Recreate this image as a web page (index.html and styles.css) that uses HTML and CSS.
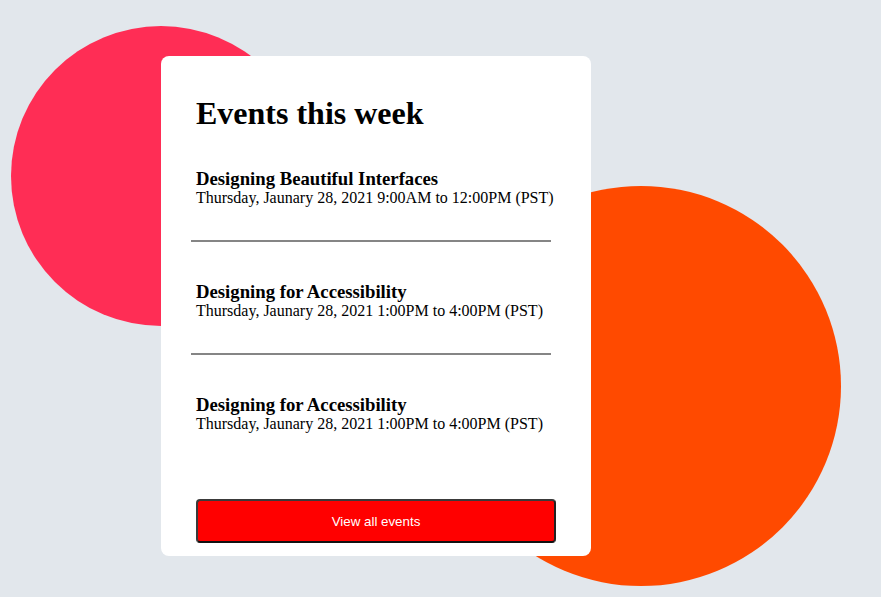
FILE: index.html
```html
<!DOCTYPE html>
<html lang="en">
<head>
<meta charset="utf-8">
<title>Events this week</title>
<link rel="stylesheet" href="styles.css">
</head>
<body>
<main class="stage">
  <div class="blob blob-pink"></div>
  <div class="blob blob-orange"></div>
  <section class="card">
    <h1 class="card-title">Events this week</h1>
    <ul class="events">
      <li class="event">
        <h2 class="event-name">Designing Beautiful Interfaces</h2>
        <p class="event-time">Thursday, Jaunary 28, 2021 9:00AM to 12:00PM (PST)</p>
      </li>
      <li class="divider"></li>
      <li class="event">
        <h2 class="event-name">Designing for Accessibility</h2>
        <p class="event-time">Thursday, Jaunary 28, 2021 1:00PM to 4:00PM (PST)</p>
      </li>
      <li class="divider"></li>
      <li class="event">
        <h2 class="event-name">Designing for Accessibility</h2>
        <p class="event-time">Thursday, Jaunary 28, 2021 1:00PM to 4:00PM (PST)</p>
      </li>
    </ul>
    <button class="btn" type="button">View all events</button>
  </section>
</main>
</body>
</html>
```

FILE: styles.css
```css
html, body {
  margin: 0;
  padding: 0;
}
body {
  background: #e2e7ec;
  font-family: "Liberation Serif", "Times New Roman", serif;
  color: #000;
  width: 881px;
  height: 597px;
  overflow: hidden;
}
.stage {
  position: relative;
  padding: 56px 0 0 161px;
}
.blob {
  position: absolute;
  border-radius: 50%;
}
.blob-pink {
  left: 11px;
  top: 26px;
  width: 300px;
  height: 300px;
  background: #ff2d55;
}
.blob-orange {
  left: 441px;
  top: 186px;
  width: 400px;
  height: 400px;
  background: #ff4a00;
}
.card {
  position: relative;
  box-sizing: border-box;
  width: 430px;
  height: 500px;
  background: #fff;
  border-radius: 8px;
  padding: 40px 35px 13px 35px;
  display: flex;
  flex-direction: column;
}
.card-title {
  margin: 0;
  font-size: 32px;
  line-height: 35px;
  font-weight: bold;
}
.events {
  list-style: none;
  margin: 37px 0 0 0;
  padding: 0;
  display: flex;
  flex-direction: column;
}
.event-name {
  margin: 0;
  font-size: 18.72px;
  line-height: 21px;
  font-weight: bold;
}
.event-time {
  margin: 0;
  font-size: 16px;
  line-height: 18px;
}
.divider {
  width: 360px;
  margin: 33px 0 39px -5px;
  border-top: 2px solid #858585;
}
.btn {
  margin-top: auto;
  width: 360px;
  height: 44px;
  background: #ff0000;
  color: #fff;
  border: 2px solid #3a3a3a;
  border-bottom-color: #111;
  border-right-color: #222;
  border-radius: 4px;
  font-family: "Liberation Sans", Arial, sans-serif;
  font-size: 13.33px;
  cursor: pointer;
}
```
